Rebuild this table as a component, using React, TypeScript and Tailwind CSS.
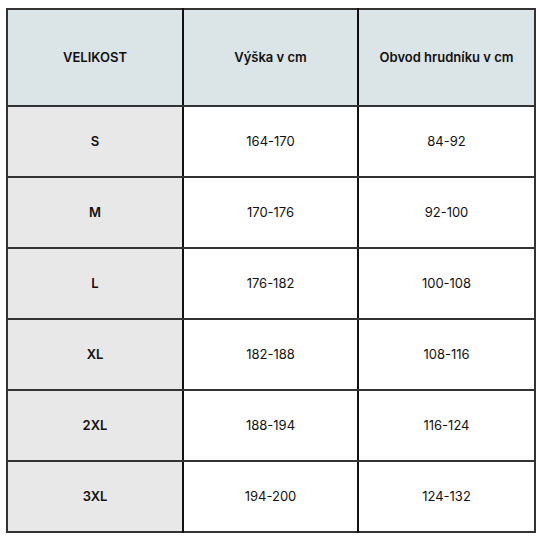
const rows = [
  ["S", "164-170", "84-92"],
  ["M", "170-176", "92-100"],
  ["L", "176-182", "100-108"],
  ["XL", "182-188", "108-116"],
  ["2XL", "188-194", "116-124"],
  ["3XL", "194-200", "124-132"],
];

export default function App() {
  return (
    <div className="min-h-[540px] w-[540px] bg-white pt-[8px] pl-[6px] font-['Inter',sans-serif] text-[13px] text-[#111]">
      <table className="w-[528px] table-fixed border-collapse border-2 border-[#333]">
        <colgroup>
          <col className="w-[176px]" />
          <col className="w-[175px]" />
          <col className="w-[177px]" />
        </colgroup>
        <thead>
          <tr className="h-[97px] bg-[#dbe4e6]">
            <th className="border-r-2 border-b-2 border-r-[#111] border-b-[#333] text-center font-semibold">
              VELIKOST
            </th>
            <th className="border-r-2 border-b-2 border-r-[#111] border-b-[#333] text-center font-semibold">
              Výška v cm
            </th>
            <th className="border-b-2 border-b-[#333] text-center font-semibold">
              Obvod hrudníku v cm
            </th>
          </tr>
        </thead>
        <tbody>
          {rows.map(([size, height, chest], i) => (
            <tr key={size} className="h-[71px]">
              <td
                className={`border-r-2 border-r-[#111] bg-[#e8e8e8] text-center font-semibold ${
                  i < rows.length - 1 ? "border-b-2 border-b-[#333]" : ""
                }`}
              >
                {size}
              </td>
              <td
                className={`border-r-2 border-r-[#111] text-center ${
                  i < rows.length - 1 ? "border-b-2 border-b-[#333]" : ""
                }`}
              >
                {height}
              </td>
              <td
                className={`text-center ${
                  i < rows.length - 1 ? "border-b-2 border-b-[#333]" : ""
                }`}
              >
                {chest}
              </td>
            </tr>
          ))}
        </tbody>
      </table>
    </div>
  );
}
